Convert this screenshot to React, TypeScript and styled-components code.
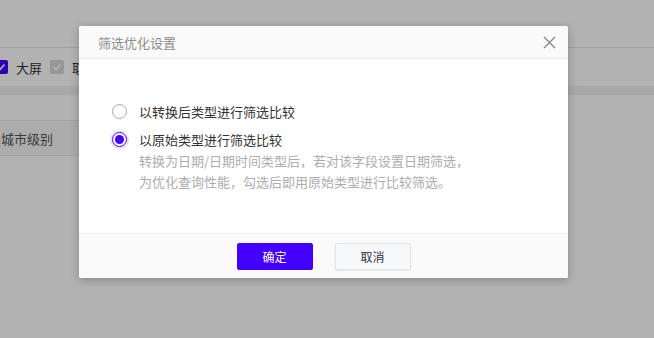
import styled, { createGlobalStyle } from "styled-components";

/* global */
const GlobalStyle = createGlobalStyle`
    html, body {
        margin: 0;
        padding: 0;
        height: 100%;
        overflow: hidden;
        background-color: #ffffff;
        font-family: "Noto Sans CJK SC", "Noto Sans", sans-serif;
    }
    * {
        box-sizing: border-box;
    }
`;

/* background page */
const Page = styled.div`
    position: relative;
    width: 654px;
    height: 338px;
    overflow: hidden;
    background-color: #ffffff;
`;

const TopBar = styled.div`
    height: 48px;
    border-bottom: 1px solid #e4e4e4;
`;

const CheckRow = styled.div`
    height: 38px;
    display: flex;
    align-items: center;
    margin-left: -6px;
    font-size: 13px;
    color: #333;
`;

const Check = styled.span<{ disabled?: boolean }>`
    width: 14px;
    height: 14px;
    border-radius: 2px;
    display: inline-flex;
    align-items: center;
    justify-content: center;
    background-color: ${(props) => (props.disabled ? "#d9d9d9" : "#4400ff")};
    margin-right: 8px;
    svg {
        width: 10px;
        height: 10px;
    }
`;

const CheckLabel = styled.span`
    margin-right: 8px;
`;

const Divider = styled.div`
    height: 9px;
    background-color: #f1f1f1;
`;

const Spacer = styled.div`
    height: 25px;
`;

const FieldCell = styled.div`
    width: 200px;
    height: 36px;
    display: flex;
    align-items: center;
    padding-left: 1px;
    border-top: 1px solid #e8e8e8;
    border-bottom: 1px solid #e8e8e8;
    background-color: #f6f6f6;
    font-size: 13px;
    color: #555;
`;

const Overlay = styled.div`
    position: absolute;
    inset: 0;
    background-color: rgba(0, 0, 0, 0.3);
`;

/* modal */
const Modal = styled.div`
    position: absolute;
    top: 26px;
    left: 79px;
    width: 489px;
    height: 252px;
    background-color: #ffffff;
    border-radius: 2px;
    box-shadow: 0 2px 8px rgba(0, 0, 0, 0.25);
    display: flex;
    flex-direction: column;
    overflow: hidden;
`;

const ModalHeader = styled.div`
    height: 33px;
    flex-shrink: 0;
    display: flex;
    align-items: center;
    justify-content: space-between;
    padding: 0 10px 0 19px;
    background-color: #fafafa;
    border-bottom: 1px solid #ececec;
`;

const ModalTitle = styled.h3`
    margin: 0;
    font-size: 13px;
    font-weight: 400;
    color: #8c8c8c;
`;

const CloseButton = styled.button`
    width: 18px;
    height: 18px;
    padding: 0;
    border: 0;
    background: transparent;
    display: flex;
    align-items: center;
    justify-content: center;
    cursor: pointer;
`;

const ModalBody = styled.div`
    flex: 1;
    padding: 42px 0 0 33px;
    display: flex;
    flex-direction: column;
    gap: 7px;
`;

const Option = styled.label`
    display: flex;
    align-items: flex-start;
    gap: 12px;
    cursor: pointer;
`;

const Radio = styled.span<{ checked?: boolean }>`
    width: 15px;
    height: 15px;
    margin-top: 3px;
    flex-shrink: 0;
    border-radius: 50%;
    border: 1px solid ${(props) => (props.checked ? "#4400ff" : "#a6a6a6")};
    box-shadow: ${(props) => (props.checked ? "0 0 0 2px rgba(68, 0, 255, 0.12)" : "none")};
    display: flex;
    align-items: center;
    justify-content: center;
    &::after {
        content: "";
        width: 9px;
        height: 9px;
        border-radius: 50%;
        background-color: ${(props) => (props.checked ? "#4400ff" : "transparent")};
    }
`;

const OptionText = styled.div`
    display: flex;
    flex-direction: column;
`;

const OptionLabel = styled.span`
    font-size: 13px;
    line-height: 21px;
    color: #333333;
`;

const OptionDesc = styled.p`
    margin: 0;
    font-size: 13px;
    line-height: 21px;
    color: #adadad;
`;

const ModalFooter = styled.div`
    height: 45px;
    flex-shrink: 0;
    display: flex;
    align-items: center;
    justify-content: center;
    gap: 22px;
    background-color: #fafafa;
    border-top: 1px solid #ececec;
`;

const Button = styled.button<{ primary?: boolean }>`
    width: 76px;
    height: 27px;
    border-radius: 2px;
    font-family: inherit;
    font-size: 12px;
    cursor: pointer;
    color: ${(props) => (props.primary ? "#ffffff" : "#333333")};
    background-color: ${(props) => (props.primary ? "#4400ff" : "#f7f8fa")};
    border: 1px solid ${(props) => (props.primary ? "#4400ff" : "#e3e3e3")};
    box-shadow: ${(props) => (props.primary ? "none" : "0 1px 2px rgba(0,0,0,0.08)")};
`;

const CheckMark = () => (
    <svg viewBox="0 0 10 10" fill="none" stroke="#fff" strokeWidth="1.6">
        <path d="M1.5 5.2 L4 7.5 L8.5 2.5" />
    </svg>
);

const options = [
    { label: "以转换后类型进行筛选比较", checked: false },
    {
        label: "以原始类型进行筛选比较",
        checked: true,
        desc: ["转换为日期/日期时间类型后，若对该字段设置日期筛选，", "为优化查询性能，勾选后即用原始类型进行比较筛选。"],
    },
];

function App() {
    return (
        <>
            <GlobalStyle />
            <Page>
                <TopBar />
                <CheckRow>
                    <Check><CheckMark /></Check>
                    <CheckLabel>大屏</CheckLabel>
                    <Check disabled><CheckMark /></Check>
                    <CheckLabel>取数</CheckLabel>
                </CheckRow>
                <Divider />
                <Spacer />
                <FieldCell>城市级别</FieldCell>
                <Overlay />
                <Modal>
                    <ModalHeader>
                        <ModalTitle>筛选优化设置</ModalTitle>
                        <CloseButton>
                            <svg width="13" height="13" viewBox="0 0 13 13" stroke="#808080" strokeWidth="1.1">
                                <path d="M1 1 L12 12 M12 1 L1 12" />
                            </svg>
                        </CloseButton>
                    </ModalHeader>
                    <ModalBody>
                        {options.map((opt) => (
                            <Option key={opt.label}>
                                <Radio checked={opt.checked} />
                                <OptionText>
                                    <OptionLabel>{opt.label}</OptionLabel>
                                    {opt.desc?.map((line) => (
                                        <OptionDesc key={line}>{line}</OptionDesc>
                                    ))}
                                </OptionText>
                            </Option>
                        ))}
                    </ModalBody>
                    <ModalFooter>
                        <Button primary>确定</Button>
                        <Button>取消</Button>
                    </ModalFooter>
                </Modal>
            </Page>
        </>
    );
}

export default App;
